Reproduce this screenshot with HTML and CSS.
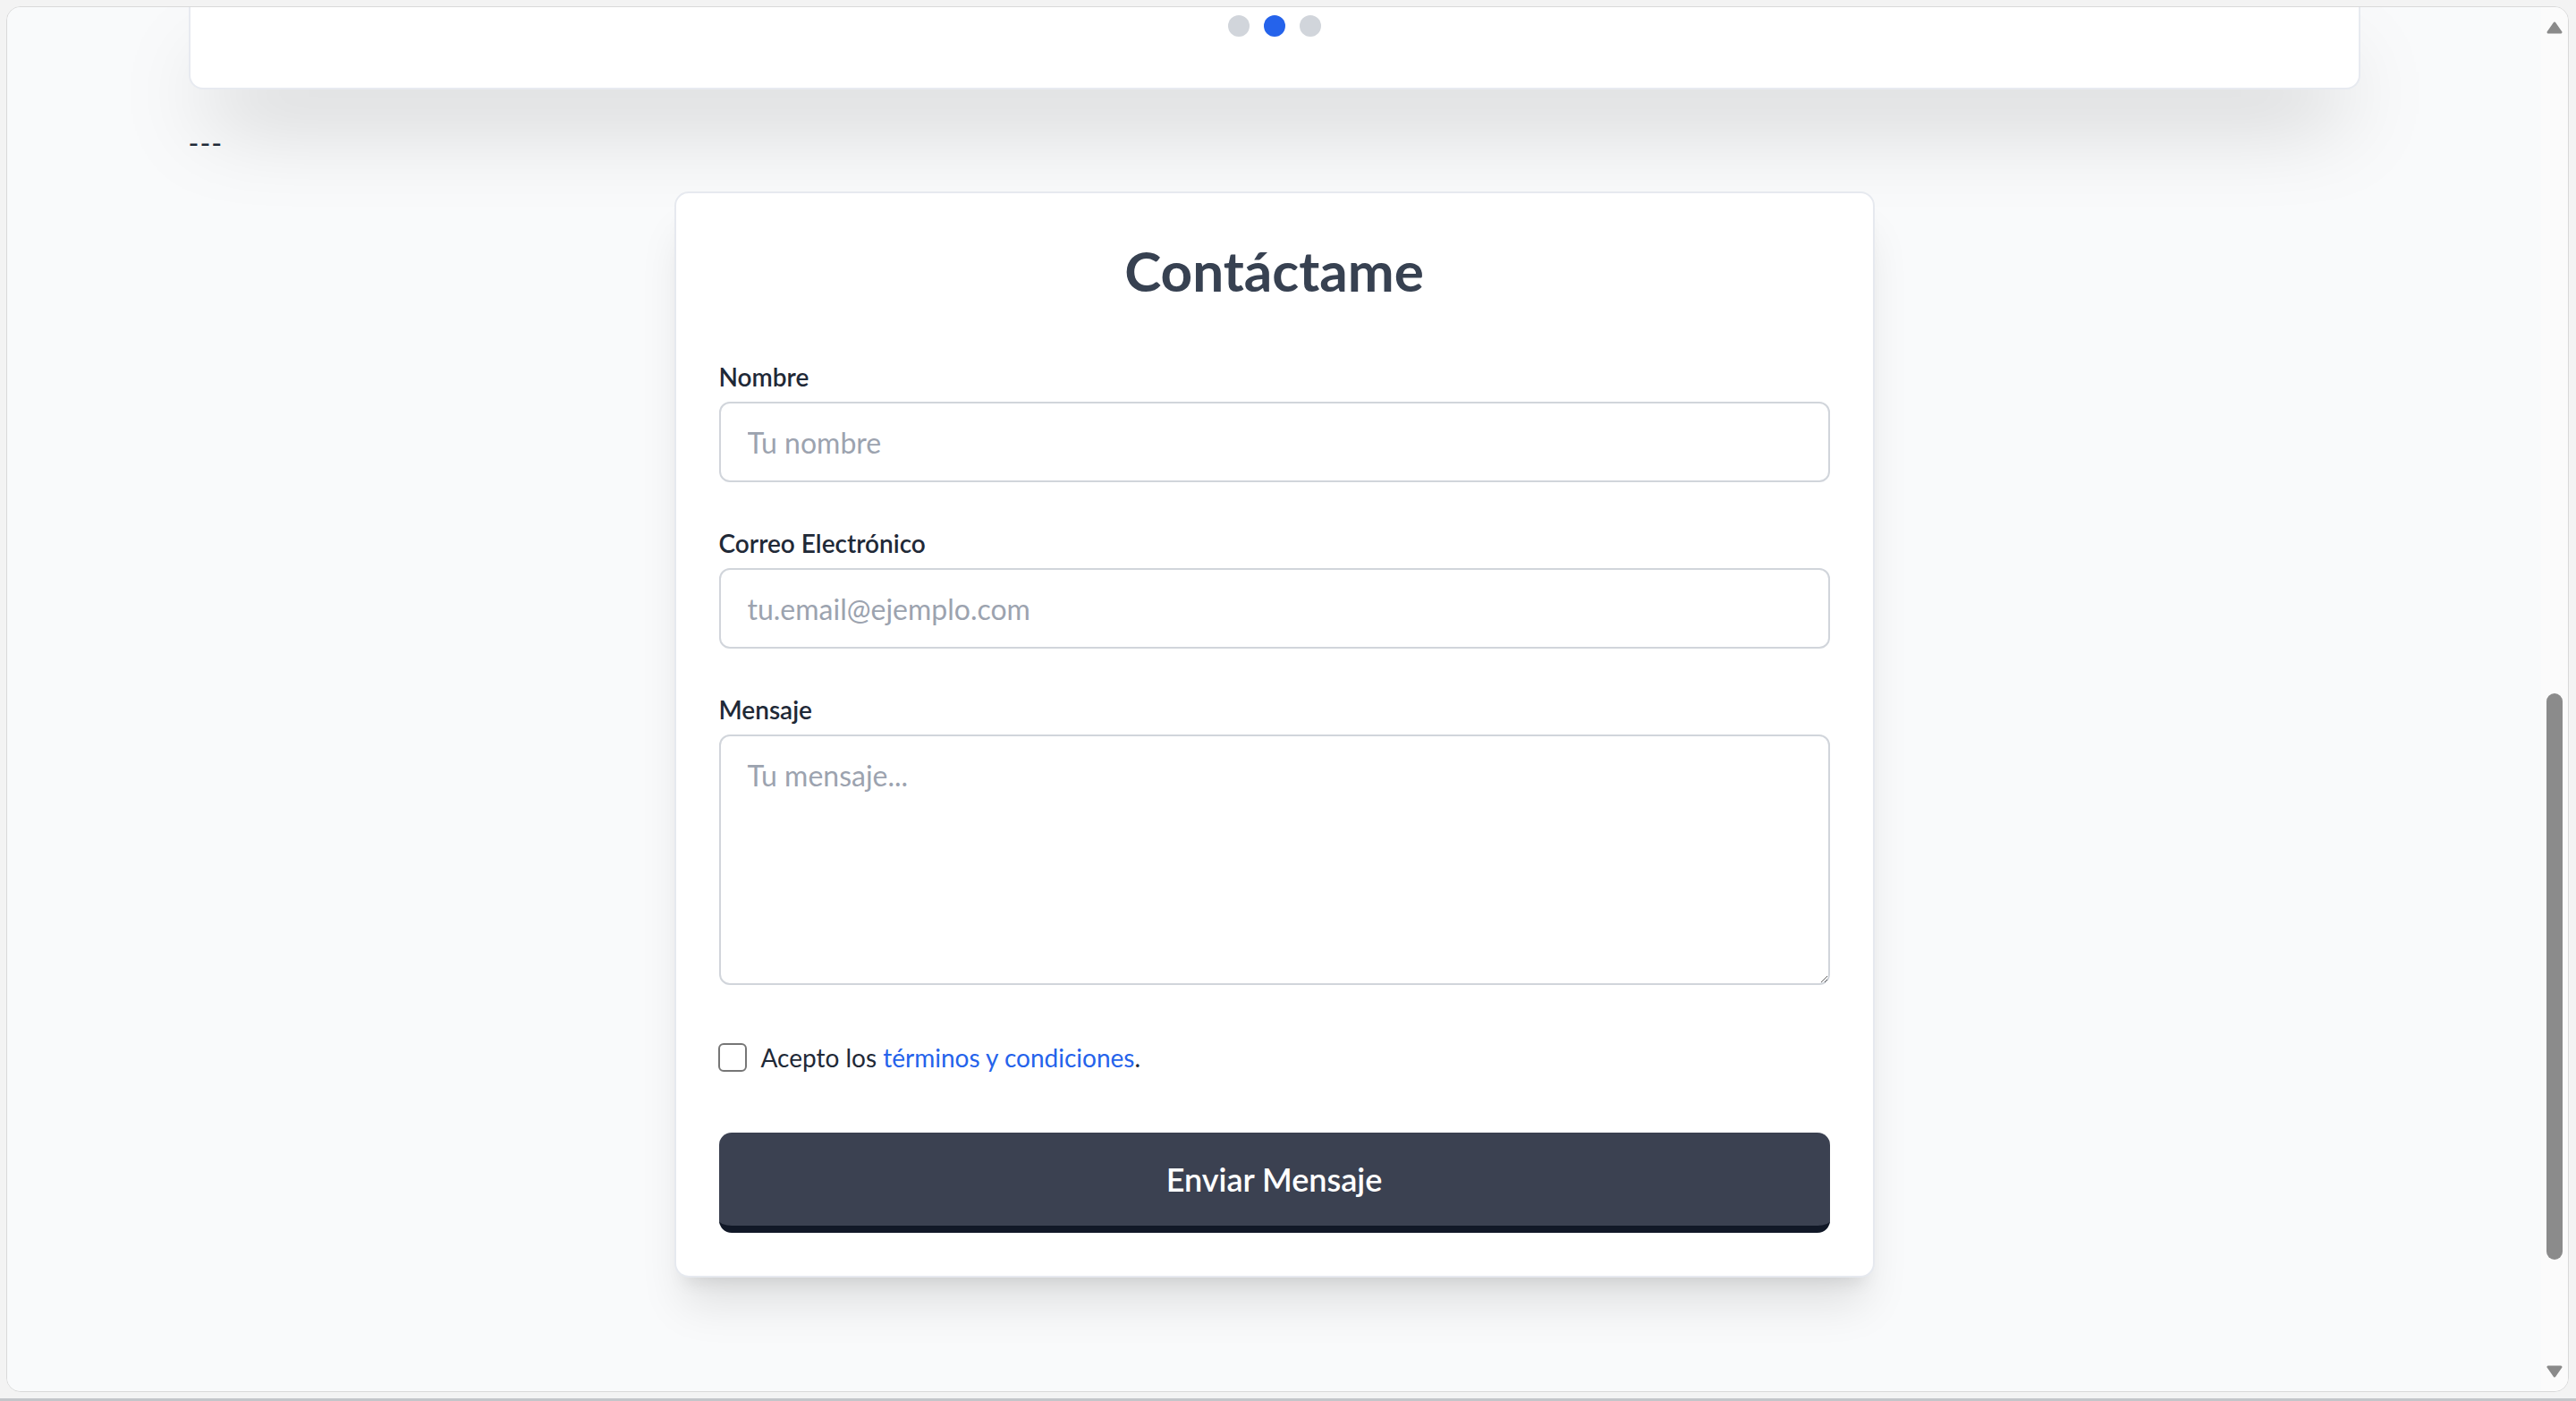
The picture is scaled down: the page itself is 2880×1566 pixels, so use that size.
FILE: index.html
```html
<!DOCTYPE html>
<html lang="es">
<head>
<meta charset="utf-8">
<title>Contáctame</title>
<link rel="stylesheet" href="styles.css">
</head>
<body>
<div class="window">
  <main class="page">
    <div class="container">
      <section class="carousel">
        <div class="dots">
          <span class="dot"></span>
          <span class="dot active"></span>
          <span class="dot"></span>
        </div>
      </section>
      <p class="sep">---</p>
    </div>
    <section class="contact">
      <h2 class="title">Contáctame</h2>
      <form class="form">
        <div class="field">
          <label class="label" for="nombre">Nombre</label>
          <input class="control" id="nombre" type="text" placeholder="Tu nombre">
        </div>
        <div class="field">
          <label class="label" for="email">Correo Electrónico</label>
          <input class="control" id="email" type="email" placeholder="tu.email@ejemplo.com">
        </div>
        <div class="field field-last">
          <label class="label" for="mensaje">Mensaje</label>
          <textarea class="control area" id="mensaje" placeholder="Tu mensaje..."></textarea>
        </div>
        <div class="check">
          <input class="box" type="checkbox" id="terms">
          <label for="terms">Acepto los <a class="link" href="#">términos y condiciones</a>.</label>
        </div>
        <button class="submit" type="submit">Enviar Mensaje</button>
      </form>
    </section>
  </main>
  <aside class="scrollbar">
    <svg class="arrow arrow-up" width="18" height="14" viewBox="0 0 18 14"><path d="M2 12 L9 2 L16 12 Z" fill="#8a8a8a" stroke="#8a8a8a" stroke-width="3" stroke-linejoin="round"/></svg>
    <span class="thumb"></span>
    <svg class="arrow arrow-down" width="18" height="14" viewBox="0 0 18 14"><path d="M2 2 L16 2 L9 12 Z" fill="#8a8a8a" stroke="#8a8a8a" stroke-width="3" stroke-linejoin="round"/></svg>
  </aside>
</div>
<div class="taskbar"></div>
</body>
</html>
```

FILE: styles.css
```css
* { box-sizing: border-box; }
html, body { margin: 0; padding: 0; }
body {
  background: #f3f3f3;
  font-family: Lato, "Open Sans", sans-serif;
  color: #1f2937;
  height: 1566px;
  overflow: hidden;
}
.window {
  margin: 7px 8px 0 7px;
  height: 1549px;
  border: 1px solid #d9d9d9;
  border-radius: 16px;
  overflow: hidden;
  display: flex;
  background: #f9fafb;
}
.page { flex: 1; min-width: 0; overflow: hidden; background: #f9fafb; }
.container { max-width: 2428px; margin: 0 auto; }
.carousel {
  background: #fff;
  border: 2px solid #e7eaf0;
  border-top: 0;
  border-radius: 0 0 16px 16px;
  box-shadow: 0 50px 100px -24px rgba(0, 0, 0, 0.25);
  padding: 9px 0 57px;
}
.dots { display: flex; justify-content: center; gap: 16px; }
.dot { width: 24px; height: 24px; border-radius: 50%; background: #d1d5db; }
.dot.active { background: #2563eb; }
.sep {
  margin: 36px 0 30px;
  font-size: 32px;
  line-height: 48px;
  letter-spacing: 1px;
  color: #1f2937;
}

.contact {
  max-width: 1342px;
  margin: 0 auto;
  background: #fff;
  border: 2px solid #e6e9ef;
  border-radius: 16px;
  padding: 48px;
  box-shadow: 0 40px 50px -10px rgba(0, 0, 0, 0.1), 0 16px 20px -12px rgba(0, 0, 0, 0.1);
}
.title {
  margin: 0 0 61px;
  text-align: center;
  font-size: 62px;
  line-height: 76px;
  font-weight: 700;
  color: #374151;
}
.form { margin: 0; }
.field { margin-bottom: 48px; }
.field-last { margin-bottom: 61px; }
.label {
  display: block;
  font-size: 28px;
  line-height: 40px;
  font-weight: 600;
  color: #1f2937;
  margin-bottom: 8px;
}
.control {
  display: block;
  width: 100%;
  height: 90px;
  border: 2px solid #d1d5db;
  border-radius: 12px;
  padding: 0 30px;
  font-family: inherit;
  font-size: 32px;
  line-height: 48px;
  color: #1f2937;
  background: #fff;
  outline: none;
  margin: 0;
}
.control::placeholder { color: #9ca3af; opacity: 1; }
.area { height: 280px; padding: 20px 30px; resize: vertical; }
.check {
  display: flex;
  align-items: center;
  font-size: 28px;
  line-height: 40px;
  color: #1f2937;
  margin-bottom: 64px;
}
.box {
  appearance: none;
  -webkit-appearance: none;
  width: 32px;
  height: 32px;
  margin: 0 16px 0 -1px;
  border: 2px solid #767676;
  border-radius: 6px;
  background: #fff;
  flex: none;
}
.link { color: #2563eb; text-decoration: none; }
.submit {
  display: block;
  width: 100%;
  background: #3b4151;
  color: #fff;
  font-family: inherit;
  font-size: 36px;
  line-height: 56px;
  font-weight: 600;
  padding: 24px;
  border: 0;
  border-bottom: 8px solid #111827;
  border-radius: 14px;
  margin: 0;
}

.scrollbar {
  width: 30px;
  flex: none;
  background: #fbfbfb;
  display: flex;
  flex-direction: column;
  align-items: center;
}
.arrow { display: block; flex: none; }
.arrow-up { margin-top: 16px; }
.thumb {
  display: block;
  width: 18px;
  height: 633px;
  margin-top: 737px;
  border-radius: 9px;
  background: #8b8b8b;
}
.arrow-down { margin-top: 118px; }
.taskbar { margin-top: 7px; height: 3px; background: #c3c6ca; }
```
